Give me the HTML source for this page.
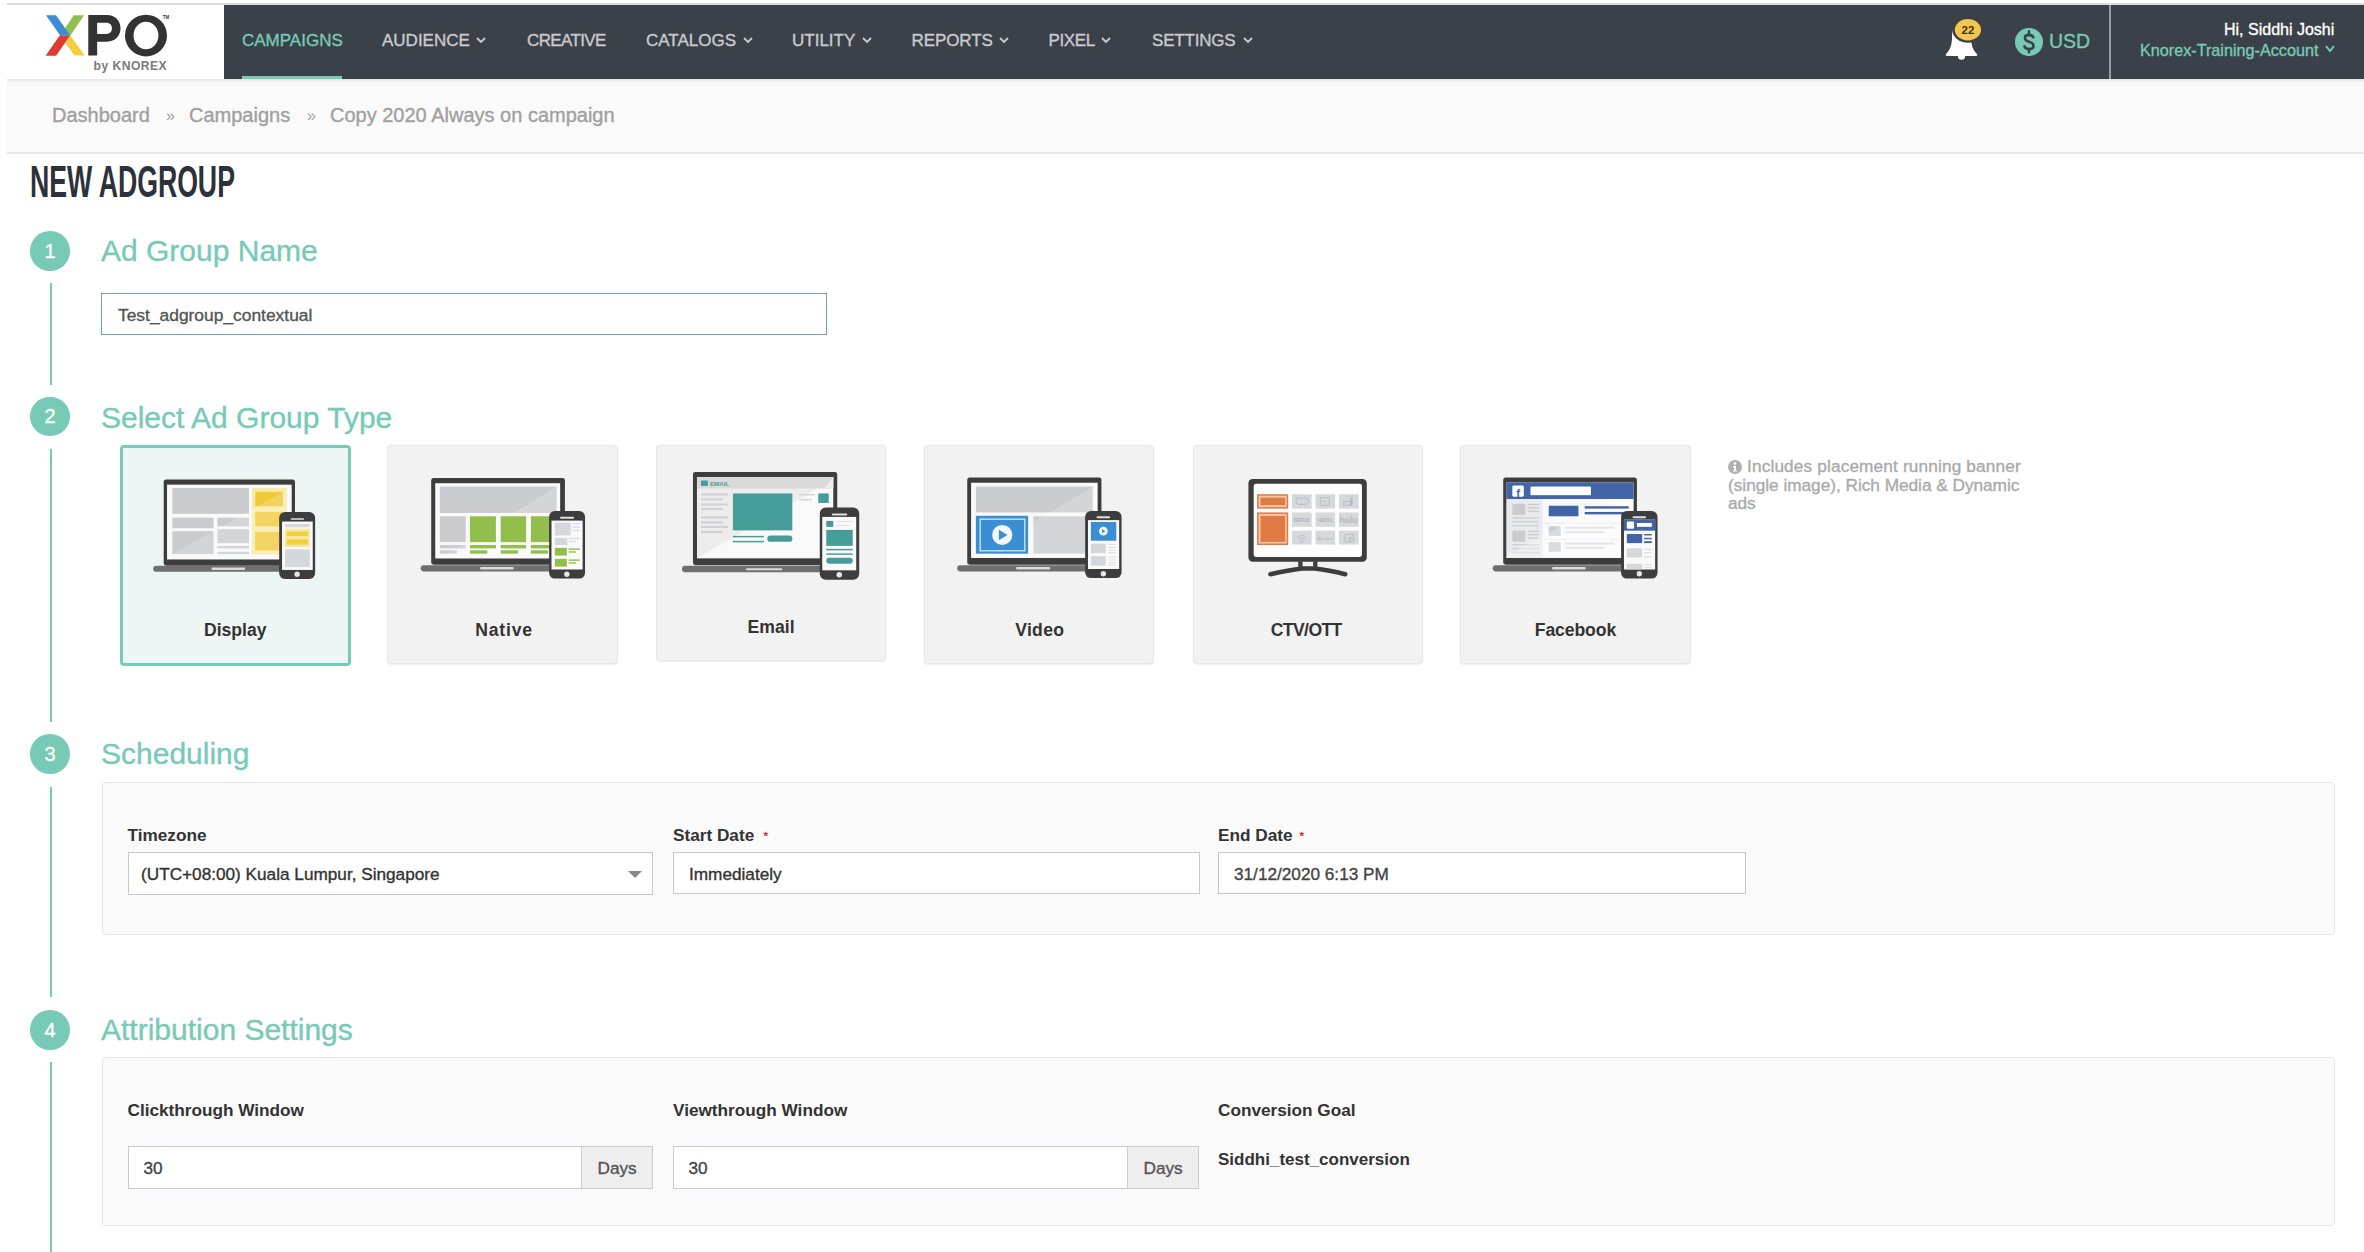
<!DOCTYPE html><html><head><meta charset="utf-8"><style>
html,body{margin:0;padding:0;background:#fff;width:2364px;height:1252px;overflow:hidden;position:relative;font-family:"Liberation Sans",sans-serif;}
.t{position:absolute;line-height:0;white-space:nowrap;-webkit-text-stroke:0.35px currentColor;}
svg{position:absolute;overflow:visible}
</style></head><body>

<div style="position:absolute;left:7px;top:3px;width:2357px;height:1.5px;background:#dddddd"></div>
<div style="position:absolute;left:224px;top:5px;width:2140px;height:74px;background:#3b4149"></div>
<div style="position:absolute;left:7px;top:79px;width:2357px;height:73px;background:#fafafa"></div>
<div style="position:absolute;left:7px;top:79px;width:2357px;height:4px;background:linear-gradient(#e4e4e6,#fafafa)"></div>
<div style="position:absolute;left:7px;top:152px;width:2357px;height:1.5px;background:#e8e8ea"></div>
<svg style="left:40px;top:10px;width:140px;height:65px" viewBox="0 0 2364 1098">
<polygon points="100,770 270,770 506,430 336,430" fill="#e03b2f"/>
<polygon points="580,770 755,770 511,430 341,430" fill="#f6cd3d"/>
<polygon points="100,770 270,770 506,430 336,430" fill="#e03b2f"/>
<polygon points="570,90 745,90 511,430 341,430" fill="#8dc04d"/>
<polygon points="100,90 270,90 511,430 341,430" fill="#3b8ed2"/>
<path fill="#333" fill-rule="evenodd" d="M815,770 V85 H1130 C1270,85 1360,180 1360,310 C1360,440 1270,535 1130,535 H965 V770 Z M965,215 H1120 C1180,215 1215,255 1215,310 C1215,365 1180,405 1120,405 H965 Z"/>
<path fill="#333" fill-rule="evenodd" d="M1435,432 A355,352 0 1,0 2145,432 A355,352 0 1,0 1435,432 Z M1580,432 A210,232 0 1,0 2000,432 A210,232 0 1,0 1580,432 Z"/>
<text x="2075" y="155" font-family="Liberation Sans" font-weight="bold" font-size="75" fill="#333">TM</text>
<text x="905" y="1015" font-family="Liberation Sans" font-weight="bold" font-size="205" fill="#7a7a7a" textLength="1235">by KNOREX</text>
</svg>
<div class="t" style="left:242px;top:41px;font-size:17px;color:#77cab5;font-weight:normal;">CAMPAIGNS</div>
<div style="position:absolute;left:242px;top:76px;width:100px;height:3px;background:#77cab5"></div>
<div class="t" style="left:382px;top:41px;font-size:17px;color:#c9cbd0;font-weight:normal;letter-spacing:0px">AUDIENCE</div>
<svg style="left:476px;top:37px;width:10px;height:6px" viewBox="0 0 10 6"><polyline points="1,1 5.0,5 9,1" fill="none" stroke="#c9cbd0" stroke-width="1.8"/></svg>
<div class="t" style="left:527px;top:41px;font-size:17px;color:#c9cbd0;font-weight:normal;letter-spacing:-0.63px">CREATIVE</div>
<div class="t" style="left:646px;top:41px;font-size:17px;color:#c9cbd0;font-weight:normal;letter-spacing:0px">CATALOGS</div>
<svg style="left:743px;top:37px;width:10px;height:6px" viewBox="0 0 10 6"><polyline points="1,1 5.0,5 9,1" fill="none" stroke="#c9cbd0" stroke-width="1.8"/></svg>
<div class="t" style="left:792px;top:41px;font-size:17px;color:#c9cbd0;font-weight:normal;letter-spacing:0px">UTILITY</div>
<svg style="left:862px;top:37px;width:10px;height:6px" viewBox="0 0 10 6"><polyline points="1,1 5.0,5 9,1" fill="none" stroke="#c9cbd0" stroke-width="1.8"/></svg>
<div class="t" style="left:911.5px;top:41px;font-size:17px;color:#c9cbd0;font-weight:normal;letter-spacing:-0.1px">REPORTS</div>
<svg style="left:999px;top:37px;width:10px;height:6px" viewBox="0 0 10 6"><polyline points="1,1 5.0,5 9,1" fill="none" stroke="#c9cbd0" stroke-width="1.8"/></svg>
<div class="t" style="left:1048.5px;top:41px;font-size:17px;color:#c9cbd0;font-weight:normal;letter-spacing:-0.35px">PIXEL</div>
<svg style="left:1101px;top:37px;width:10px;height:6px" viewBox="0 0 10 6"><polyline points="1,1 5.0,5 9,1" fill="none" stroke="#c9cbd0" stroke-width="1.8"/></svg>
<div class="t" style="left:1152px;top:41px;font-size:17px;color:#c9cbd0;font-weight:normal;letter-spacing:-0.2px">SETTINGS</div>
<svg style="left:1243px;top:37px;width:10px;height:6px" viewBox="0 0 10 6"><polyline points="1,1 5.0,5 9,1" fill="none" stroke="#c9cbd0" stroke-width="1.8"/></svg>
<svg style="left:1940px;top:15px;width:50px;height:50px" viewBox="0 0 50 50">
<path d="M21.5,8 C14,9 12,15 12,22 C12,30 10,35 6.5,38.5 C5,40 5.5,41 7.5,41 L35.5,41 C37.5,41 38,40 36.5,38.5 C33,35 31,30 31,22 C31,15 29,9 21.5,8 Z" fill="#fff"/>
<path d="M17.8,41 A3.7,3.7 0 0,0 25.2,41 Z" fill="#fff"/>
<ellipse cx="27.9" cy="14.8" rx="15.6" ry="13" fill="#3b4149"/>
<ellipse cx="27.9" cy="14.8" rx="13.1" ry="10.7" fill="#f4c54c"/>
<text x="27.9" y="19" text-anchor="middle" font-family="Liberation Sans" font-weight="bold" font-size="11.5" fill="#3a3520">22</text>
</svg>
<svg style="left:2015px;top:28px;width:28px;height:28px" viewBox="0 0 28 28">
<circle cx="14" cy="14" r="14" fill="#77cab5"/>
<path d="M18.3,9.3 C17.6,7.6 16.2,6.9 14,6.9 C11.4,6.9 9.9,8.2 9.9,10.2 C9.9,12.4 11.9,13.1 14,13.7 C16.4,14.4 18.5,15.2 18.5,17.7 C18.5,19.8 16.7,21.1 14,21.1 C11.7,21.1 10.2,20.2 9.4,18.4" fill="none" stroke="#3b4149" stroke-width="2.6" stroke-linecap="round"/>
<path d="M14,3.2 V7 M14,21 V24.2" stroke="#3b4149" stroke-width="2.4" stroke-linecap="round"/>
</svg>
<div class="t" style="left:2049px;top:41px;font-size:19.5px;color:#77cab5;font-weight:normal;">USD</div>
<div style="position:absolute;left:2109px;top:5px;width:2px;height:74px;background:#9a9ea4"></div>
<div class="t" style="left:2224px;top:30px;font-size:16px;color:#ffffff;font-weight:normal;">Hi, Siddhi Joshi</div>
<div class="t" style="left:2140px;top:50px;font-size:16.2px;color:#77cab5;font-weight:normal;">Knorex-Training-Account</div>
<svg style="left:2325px;top:45px;width:10px;height:7px" viewBox="0 0 10 7"><polyline points="1,1 5.0,6 9,1" fill="none" stroke="#77cab5" stroke-width="2"/></svg>
<div class="t" style="left:52px;top:115px;font-size:20px;color:#a0a0a0;font-weight:normal;">Dashboard</div>
<div class="t" style="left:166px;top:116px;font-size:16px;color:#a0a0a0;font-weight:normal;-webkit-text-stroke:0">»</div>
<div class="t" style="left:189px;top:115px;font-size:20px;color:#a0a0a0;font-weight:normal;">Campaigns</div>
<div class="t" style="left:307px;top:116px;font-size:16px;color:#a0a0a0;font-weight:normal;-webkit-text-stroke:0">»</div>
<div class="t" style="left:330px;top:115px;font-size:20px;color:#a0a0a0;font-weight:normal;">Copy 2020 Always on campaign</div>
<div class="t" style="left:29.5px;top:182px;font-size:44px;font-weight:bold;-webkit-text-stroke:0;color:#2d3139;transform-origin:0 0;transform:scaleX(0.606)">NEW ADGROUP</div>
<div style="position:absolute;left:30.2px;top:231.15px;width:39.5px;height:39.5px;background:#77cab5;border-radius:50%"></div>
<div class="t" style="left:30px;width:40px;text-align:center;top:251px;font-size:20px;color:#fff">1</div>
<div class="t" style="left:101px;top:251px;font-size:30px;color:#77cab5;font-weight:normal;">Ad Group Name</div>
<div style="position:absolute;left:50px;top:282.5px;width:2px;height:102.30000000000001px;background:#77cab5"></div>
<div style="position:absolute;left:30.2px;top:396.65px;width:39.5px;height:39.5px;background:#77cab5;border-radius:50%"></div>
<div class="t" style="left:30px;width:40px;text-align:center;top:416px;font-size:20px;color:#fff">2</div>
<div class="t" style="left:101px;top:418px;font-size:30px;color:#77cab5;font-weight:normal;">Select Ad Group Type</div>
<div style="position:absolute;left:50px;top:449px;width:2px;height:273px;background:#77cab5"></div>
<div style="position:absolute;left:30.2px;top:734.05px;width:39.5px;height:39.5px;background:#77cab5;border-radius:50%"></div>
<div class="t" style="left:30px;width:40px;text-align:center;top:754px;font-size:20px;color:#fff">3</div>
<div class="t" style="left:101px;top:754px;font-size:30px;color:#77cab5;font-weight:normal;">Scheduling</div>
<div style="position:absolute;left:50px;top:787px;width:2px;height:209.79999999999995px;background:#77cab5"></div>
<div style="position:absolute;left:30.2px;top:1010.25px;width:39.5px;height:39.5px;background:#77cab5;border-radius:50%"></div>
<div class="t" style="left:30px;width:40px;text-align:center;top:1030px;font-size:20px;color:#fff">4</div>
<div class="t" style="left:101px;top:1030px;font-size:30px;color:#77cab5;font-weight:normal;">Attribution Settings</div>
<div style="position:absolute;left:50px;top:1061.5px;width:2px;height:190.5px;background:#77cab5"></div>
<div style="position:absolute;left:101px;top:292.5px;width:725.5px;height:42.5px;box-sizing:border-box;border:1.8px solid #69a6ae;background:#fff"></div>
<div class="t" style="left:118px;top:315px;font-size:17.4px;color:#555;font-weight:normal;">Test_adgroup_contextual</div>
<div style="position:absolute;left:119.6px;top:445px;width:231.3px;height:221px;box-sizing:border-box;border:3px solid #77cab5;border-radius:4px;background:#edf6f4"></div>
<div class="t" style="left:119.60px;width:231.30px;text-align:center;top:630px;font-size:17.6px;font-weight:bold;-webkit-text-stroke:0;color:#333;letter-spacing:0px">Display</div>
<div style="position:absolute;left:387.3px;top:445px;width:230.6px;height:218.8px;box-sizing:border-box;border:1px solid #e8e8e8;border-radius:4px;background:#f2f2f2;box-shadow:0 0.5px 1.5px rgba(0,0,0,0.07)"></div>
<div class="t" style="left:388.80px;width:230.60px;text-align:center;top:630px;font-size:17.6px;font-weight:bold;-webkit-text-stroke:0;color:#333;letter-spacing:0.8px">Native</div>
<div style="position:absolute;left:656.2px;top:445px;width:229.8px;height:215.8px;box-sizing:border-box;border:1px solid #e8e8e8;border-radius:4px;background:#f2f2f2;box-shadow:0 0.5px 1.5px rgba(0,0,0,0.07)"></div>
<div class="t" style="left:656.20px;width:229.80px;text-align:center;top:627px;font-size:17.6px;font-weight:bold;-webkit-text-stroke:0;color:#333;letter-spacing:0px">Email</div>
<div style="position:absolute;left:924.3px;top:445px;width:229.5px;height:219.3px;box-sizing:border-box;border:1px solid #e8e8e8;border-radius:4px;background:#f2f2f2;box-shadow:0 0.5px 1.5px rgba(0,0,0,0.07)"></div>
<div class="t" style="left:925.00px;width:229.50px;text-align:center;top:630px;font-size:17.6px;font-weight:bold;-webkit-text-stroke:0;color:#333;letter-spacing:0.3px">Video</div>
<div style="position:absolute;left:1192.7px;top:445px;width:230.1px;height:218.8px;box-sizing:border-box;border:1px solid #e8e8e8;border-radius:4px;background:#f2f2f2;box-shadow:0 0.5px 1.5px rgba(0,0,0,0.07)"></div>
<div class="t" style="left:1191.20px;width:230.10px;text-align:center;top:630px;font-size:17.6px;font-weight:bold;-webkit-text-stroke:0;color:#333;letter-spacing:-0.6px">CTV/OTT</div>
<div style="position:absolute;left:1460px;top:445px;width:230.8px;height:218.8px;box-sizing:border-box;border:1px solid #e8e8e8;border-radius:4px;background:#f2f2f2;box-shadow:0 0.5px 1.5px rgba(0,0,0,0.07)"></div>
<div class="t" style="left:1460.00px;width:230.80px;text-align:center;top:630px;font-size:17.6px;font-weight:bold;-webkit-text-stroke:0;color:#333;letter-spacing:-0.1px">Facebook</div>
<svg style="left:145px;top:465px;width:180px;height:120px" viewBox="0 0 1878 1252"><rect x="195" y="150" width="1370" height="900" rx="25" fill="#3d3d3d"/><rect x="230" y="205" width="1300" height="780" rx="0" fill="#f9f9f9"/><rect x="285" y="240" width="800" height="270" rx="0" fill="#c9cbcf"/><rect x="285" y="550" width="430" height="110" rx="0" fill="#c9cbcf"/><rect x="755" y="550" width="330" height="90" rx="0" fill="#c9cbcf"/><rect x="285" y="690" width="430" height="240" rx="0" fill="#c9cbcf"/><rect x="755" y="670" width="330" height="145" rx="0" fill="#c9cbcf"/><rect x="755" y="845" width="330" height="25" rx="0" fill="#c9cbcf"/><rect x="755" y="905" width="330" height="25" rx="0" fill="#c9cbcf"/><rect x="1115" y="240" width="365" height="695" rx="0" fill="#f8eba6"/><rect x="1150" y="280" width="290" height="150" rx="0" fill="#efc938"/><rect x="1150" y="490" width="290" height="150" rx="0" fill="#f0ca3a"/><rect x="1150" y="700" width="290" height="190" rx="0" fill="#f0ca3a"/><clipPath id="gl1"><rect x="230" y="205" width="1300" height="780"/></clipPath><polygon clip-path="url(#gl1)" points="130,1016.8 1630,176.79999999999995 1630,1085 130,1085" fill="#fff" fill-opacity="0.2"/><rect x="85" y="1050" width="1475" height="65" rx="32.5" fill="#6f6f6f"/><rect x="695" y="1070" width="350" height="25" rx="10" fill="#dadada"/><rect x="1400" y="490" width="375" height="700" rx="60" fill="#3d3d3d"/><rect x="1430" y="590" width="320" height="505" rx="0" fill="#fafafa"/><rect x="1520" y="555" width="140" height="17" rx="8" fill="#e0e0e0"/><circle cx="1587" cy="1140" r="28" fill="#e6e6e6"/><rect x="1460" y="615" width="260" height="35" rx="0" fill="#d4d7dc"/><rect x="1455" y="665" width="265" height="190" rx="0" fill="#f7e7a0"/><rect x="1480" y="695" width="220" height="45" rx="0" fill="#f2cf3f"/><rect x="1480" y="775" width="220" height="55" rx="0" fill="#f2cf3f"/><rect x="1460" y="880" width="260" height="185" rx="0" fill="#d4d7dc"/></svg>
<svg style="left:413px;top:465px;width:180px;height:120px" viewBox="0 0 1878 1252"><rect x="190" y="135" width="1395" height="905" rx="25" fill="#3d3d3d"/><rect x="232" y="190" width="1303" height="785" rx="0" fill="#f9f9f9"/><rect x="280" y="225" width="1220" height="275" rx="0" fill="#c9cbcf"/><rect x="280" y="535" width="270" height="270" rx="0" fill="#c9cbcf"/><rect x="280" y="835" width="270" height="35" rx="0" fill="#c9cbcf"/><rect x="280" y="890" width="180" height="35" rx="0" fill="#c9cbcf"/><clipPath id="gl2"><rect x="232" y="190" width="1303" height="785"/></clipPath><polygon clip-path="url(#gl2)" points="132,1059.98 1635,143.15000000000003 1635,1075 132,1075" fill="#fff" fill-opacity="0.2"/><rect x="595" y="535" width="270" height="270" rx="0" fill="#92be4c"/><rect x="595" y="835" width="270" height="35" rx="0" fill="#92be4c"/><rect x="595" y="890" width="180" height="35" rx="0" fill="#92be4c"/><rect x="915" y="535" width="265" height="270" rx="0" fill="#92be4c"/><rect x="915" y="835" width="265" height="35" rx="0" fill="#92be4c"/><rect x="915" y="890" width="180" height="35" rx="0" fill="#92be4c"/><rect x="1230" y="535" width="270" height="270" rx="0" fill="#92be4c"/><rect x="1230" y="835" width="270" height="35" rx="0" fill="#92be4c"/><rect x="1230" y="890" width="180" height="35" rx="0" fill="#92be4c"/><rect x="80" y="1045" width="1480" height="65" rx="32.5" fill="#6f6f6f"/><rect x="700" y="1065" width="350" height="25" rx="10" fill="#dadada"/><rect x="1420" y="480" width="375" height="705" rx="60" fill="#3d3d3d"/><rect x="1445" y="580" width="325" height="510" rx="0" fill="#fafafa"/><rect x="1535" y="540" width="145" height="20" rx="8" fill="#e0e0e0"/><circle cx="1605" cy="1140" r="28" fill="#e6e6e6"/><rect x="1480" y="600" width="165" height="135" rx="0" fill="#d4d7dc"/><rect x="1660" y="605" width="80" height="15" rx="0" fill="#dde"/><rect x="1660" y="640" width="80" height="15" rx="0" fill="#dde"/><rect x="1660" y="675" width="80" height="15" rx="0" fill="#dde"/><rect x="1480" y="760" width="130" height="75" rx="0" fill="#d4d7dc"/><rect x="1625" y="760" width="115" height="15" rx="0" fill="#dde"/><rect x="1625" y="790" width="75" height="15" rx="0" fill="#dde"/><rect x="1480" y="865" width="125" height="80" rx="0" fill="#92be4c"/><rect x="1625" y="870" width="115" height="15" rx="0" fill="#92be4c"/><rect x="1625" y="900" width="75" height="15" rx="0" fill="#92be4c"/><rect x="1480" y="980" width="125" height="80" rx="0" fill="#92be4c"/><rect x="1625" y="985" width="115" height="15" rx="0" fill="#92be4c"/><rect x="1625" y="1015" width="75" height="15" rx="0" fill="#92be4c"/></svg>
<svg style="left:678px;top:462px;width:190px;height:125px" viewBox="0 0 1903 1252"><rect x="150" y="100" width="1445" height="935" rx="25" fill="#3d3d3d"/><rect x="190" y="150" width="1365" height="815" rx="0" fill="#f9f9f9"/><polygon points="190,150 1555,150 1555,170 190,965" fill="#ececec"/><polygon points="190,150 1555,150 1555,265 190,265" fill="#dadada"/><polygon points="1460,265 1555,265 1555,150 1555,150" fill="#ececec"/><rect x="230" y="185" width="70" height="55" rx="8" fill="#459c99"/><text x="320" y="238" font-family="Liberation Sans" font-size="62" font-weight="bold" fill="#459c99">EMAIL</text><rect x="230" y="315" width="270" height="20" rx="0" fill="#cfcfd4"/><rect x="230" y="365" width="220" height="20" rx="0" fill="#cfcfd4"/><rect x="230" y="415" width="270" height="20" rx="0" fill="#cfcfd4"/><rect x="230" y="460" width="220" height="20" rx="0" fill="#cfcfd4"/><rect x="230" y="545" width="270" height="20" rx="0" fill="#cfcfd4"/><rect x="230" y="595" width="220" height="20" rx="0" fill="#cfcfd4"/><rect x="230" y="640" width="270" height="20" rx="0" fill="#cfcfd4"/><rect x="230" y="690" width="220" height="20" rx="0" fill="#cfcfd4"/><rect x="550" y="315" width="595" height="370" rx="0" fill="#459c99"/><rect x="550" y="740" width="310" height="15" rx="0" fill="#459c99"/><rect x="550" y="790" width="310" height="15" rx="0" fill="#459c99"/><rect x="895" y="735" width="250" height="65" rx="32" fill="#459c99"/><rect x="1405" y="315" width="105" height="95" rx="0" fill="#459c99"/><rect x="1215" y="320" width="155" height="15" rx="0" fill="#d5d5d5"/><rect x="1215" y="370" width="125" height="15" rx="0" fill="#d5d5d5"/><rect x="40" y="1040" width="1520" height="65" rx="32.5" fill="#6f6f6f"/><rect x="680" y="1065" width="365" height="20" rx="10" fill="#dadada"/><rect x="1420" y="455" width="395" height="725" rx="60" fill="#3d3d3d"/><rect x="1445" y="550" width="340" height="535" rx="0" fill="#fafafa"/><rect x="1540" y="515" width="155" height="20" rx="8" fill="#e0e0e0"/><circle cx="1615" cy="1130" r="28" fill="#e6e6e6"/><rect x="1485" y="590" width="70" height="60" rx="0" fill="#459c99"/><rect x="1585" y="590" width="165" height="10" rx="0" fill="#ddd"/><rect x="1585" y="632" width="135" height="10" rx="0" fill="#ddd"/><rect x="1485" y="680" width="265" height="160" rx="0" fill="#459c99"/><rect x="1485" y="870" width="265" height="15" rx="0" fill="#459c99"/><rect x="1485" y="915" width="265" height="15" rx="0" fill="#459c99"/><rect x="1485" y="960" width="265" height="60" rx="30" fill="#459c99"/></svg>
<svg style="left:950px;top:465px;width:180px;height:120px" viewBox="0 0 1878 1252"><rect x="180" y="130" width="1400" height="910" rx="25" fill="#3d3d3d"/><rect x="220" y="185" width="1320" height="785" rx="0" fill="#f9f9f9"/><rect x="270" y="225" width="1220" height="270" rx="0" fill="#c9cbcf"/><rect x="870" y="535" width="630" height="390" rx="0" fill="#c9cbcf"/><clipPath id="gl3"><rect x="220" y="185" width="1320" height="785"/></clipPath><polygon clip-path="url(#gl3)" points="120,1037.8 1640,141.0 1640,1070 120,1070" fill="#fff" fill-opacity="0.2"/><rect x="270" y="530" width="545" height="395" rx="0" fill="#3a8fd3"/><rect x="315" y="565" width="465" height="330" fill="none" stroke="#cde6fb" stroke-width="14"/><circle cx="545" cy="730" r="105" fill="#f4f7fa"/><polygon points="510,675 510,785 600,730" fill="#3a8fd3"/><rect x="75" y="1045" width="1485" height="65" rx="32.5" fill="#6f6f6f"/><rect x="690" y="1065" width="355" height="25" rx="10" fill="#dadada"/><rect x="1410" y="480" width="380" height="700" rx="60" fill="#3d3d3d"/><rect x="1440" y="575" width="325" height="510" rx="0" fill="#fafafa"/><rect x="1530" y="535" width="140" height="20" rx="8" fill="#e0e0e0"/><circle cx="1600" cy="1135" r="28" fill="#e6e6e6"/><rect x="1470" y="595" width="265" height="195" rx="0" fill="#3a8fd3"/><circle cx="1600" cy="690" r="45" fill="#f4f7fa"/><polygon points="1585,668 1585,712 1622,690" fill="#3a8fd3"/><rect x="1470" y="820" width="155" height="100" rx="0" fill="#d4d7dc"/><rect x="1470" y="950" width="155" height="100" rx="0" fill="#d4d7dc"/><rect x="1650" y="825" width="80" height="10" rx="0" fill="#d8dbe0"/><rect x="1650" y="855" width="80" height="10" rx="0" fill="#d8dbe0"/><rect x="1650" y="885" width="80" height="10" rx="0" fill="#d8dbe0"/><rect x="1650" y="910" width="80" height="10" rx="0" fill="#d8dbe0"/><rect x="1650" y="955" width="80" height="10" rx="0" fill="#d8dbe0"/><rect x="1650" y="985" width="80" height="10" rx="0" fill="#d8dbe0"/><rect x="1650" y="1015" width="80" height="10" rx="0" fill="#d8dbe0"/><rect x="1650" y="1040" width="80" height="10" rx="0" fill="#d8dbe0"/></svg>
<svg style="left:1235px;top:465px;width:145px;height:120px" viewBox="0 0 1513 1252"><rect x="140" y="145" width="1235" height="865" rx="45" fill="#3d3d3d"/><rect x="195" y="195" width="1130" height="765" rx="25" fill="#fdfdfd"/><rect x="230" y="305" width="325" height="150" rx="0" fill="#e07b46"/><rect x="246" y="321" width="293" height="118" rx="0" fill="#f8c7a5"/><rect x="266" y="341" width="257" height="78" rx="0" fill="#e07b46"/><rect x="230" y="495" width="325" height="340" rx="0" fill="#e07b46"/><rect x="246" y="511" width="293" height="308" rx="0" fill="#f8c7a5"/><rect x="266" y="531" width="257" height="272" rx="0" fill="#e07b46"/><rect x="595" y="305" width="205" height="150" rx="0" fill="#d5d8dd"/><rect x="595" y="495" width="205" height="150" rx="0" fill="#d5d8dd"/><rect x="595" y="685" width="205" height="145" rx="0" fill="#d5d8dd"/><rect x="840" y="305" width="205" height="150" rx="0" fill="#d5d8dd"/><rect x="840" y="495" width="205" height="150" rx="0" fill="#d5d8dd"/><rect x="840" y="685" width="205" height="145" rx="0" fill="#d5d8dd"/><rect x="1085" y="305" width="205" height="150" rx="0" fill="#d5d8dd"/><rect x="1085" y="495" width="205" height="150" rx="0" fill="#d5d8dd"/><rect x="1085" y="685" width="205" height="145" rx="0" fill="#d5d8dd"/><text x="1187" y="605" text-anchor="middle" font-family="Liberation Sans" font-weight="bold" font-size="88" fill="#b5b8be">hulu</text><rect x="635" y="345" width="130" height="65" rx="30" fill="none" stroke="#b5b8be" stroke-width="10"/><rect x="890" y="340" width="95" height="80" rx="10" fill="none" stroke="#b5b8be" stroke-width="9"/><rect x="915" y="375" width="40" height="8" fill="#b5b8be"/><rect x="1135" y="380" width="70" height="40" fill="none" stroke="#b5b8be" stroke-width="9"/><rect x="1205" y="340" width="22" height="80" fill="#b5b8be"/><text x="697" y="598" text-anchor="middle" font-family="Liberation Sans" font-weight="bold" font-size="56" fill="#b5b8be" textLength="170">NETFLIX</text><text x="942" y="596" text-anchor="middle" font-family="Liberation Sans" font-weight="bold" font-size="50" fill="#b5b8be" textLength="150">HBO GO</text><path d="M650,755 Q697,715 744,755 M665,775 Q697,748 729,775 M680,795 Q697,782 714,795" fill="none" stroke="#b5b8be" stroke-width="9"/><circle cx="697" cy="812" r="8" fill="#b5b8be"/><text x="942" y="785" text-anchor="middle" font-family="Liberation Sans" font-weight="bold" font-size="44" fill="#b5b8be" textLength="170">Movies</text><rect x="1150" y="722" width="85" height="80" rx="8" fill="none" stroke="#b5b8be" stroke-width="9"/><text x="1200" y="800" text-anchor="middle" font-family="Liberation Sans" font-weight="bold" font-size="80" fill="#b5b8be">f</text><rect x="660" y="1005" width="45" height="70" rx="0" fill="#3d3d3d"/><rect x="815" y="1005" width="45" height="70" rx="0" fill="#3d3d3d"/><path d="M370,1140 Q560,1095 700,1080 L830,1080 Q980,1095 1150,1140" fill="none" stroke="#3d3d3d" stroke-width="48" stroke-linecap="round"/></svg>
<svg style="left:1485px;top:465px;width:180px;height:120px" viewBox="0 0 1878 1252"><rect x="190" y="130" width="1395" height="910" rx="25" fill="#3d3d3d"/><rect x="225" y="180" width="1325" height="790" rx="0" fill="#f9f9f9"/><rect x="225" y="180" width="1325" height="175" rx="0" fill="#4464a8"/><rect x="285" y="215" width="120" height="115" rx="15" fill="#fff"/><text x="325" y="330" font-family="Liberation Sans" font-weight="bold" font-size="120" fill="#4464a8">f</text><rect x="475" y="225" width="630" height="90" rx="0" fill="#fff"/><rect x="225" y="355" width="375" height="615" rx="0" fill="#e9eaed"/><rect x="285" y="405" width="135" height="115" rx="0" fill="#c9cbcf"/><rect x="285" y="685" width="135" height="115" rx="0" fill="#c9cbcf"/><rect x="445" y="405" width="120" height="15" rx="0" fill="#ccc"/><rect x="445" y="440" width="120" height="15" rx="0" fill="#ccc"/><rect x="445" y="475" width="120" height="15" rx="0" fill="#ccc"/><rect x="285" y="545" width="280" height="15" rx="0" fill="#d0d0d0"/><rect x="285" y="585" width="280" height="15" rx="0" fill="#d0d0d0"/><rect x="285" y="625" width="280" height="15" rx="0" fill="#d0d0d0"/><rect x="285" y="825" width="280" height="15" rx="0" fill="#d0d0d0"/><rect x="285" y="865" width="280" height="15" rx="0" fill="#d0d0d0"/><rect x="285" y="905" width="280" height="15" rx="0" fill="#d0d0d0"/><rect x="445" y="685" width="120" height="15" rx="0" fill="#ccc"/><rect x="445" y="720" width="120" height="15" rx="0" fill="#ccc"/><rect x="445" y="755" width="120" height="15" rx="0" fill="#ccc"/><rect x="610" y="603" width="810" height="7" rx="0" fill="#e3e3e3"/><rect x="610" y="773" width="810" height="7" rx="0" fill="#e3e3e3"/><rect x="665" y="640" width="125" height="100" rx="0" fill="#c9cbcf"/><rect x="835" y="645" width="515" height="20" rx="0" fill="#d8d9dd"/><rect x="835" y="690" width="410" height="20" rx="0" fill="#d8d9dd"/><rect x="665" y="805" width="125" height="100" rx="0" fill="#c9cbcf"/><rect x="835" y="810" width="515" height="20" rx="0" fill="#d8d9dd"/><rect x="835" y="855" width="410" height="20" rx="0" fill="#d8d9dd"/><clipPath id="gl4"><rect x="225" y="356" width="1325" height="614"/></clipPath><polygon clip-path="url(#gl4)" points="125,994.9 1650,171.39999999999998 1650,1070 125,1070" fill="#fff" fill-opacity="0.3"/><rect x="665" y="425" width="310" height="110" rx="0" fill="#4464a8"/><rect x="1040" y="430" width="460" height="25" rx="0" fill="#4464a8"/><rect x="1040" y="490" width="460" height="25" rx="0" fill="#4464a8"/><rect x="80" y="1045" width="1480" height="65" rx="32.5" fill="#6f6f6f"/><rect x="700" y="1065" width="350" height="25" rx="10" fill="#dadada"/><rect x="1420" y="480" width="380" height="705" rx="60" fill="#3d3d3d"/><rect x="1450" y="570" width="325" height="520" rx="0" fill="#fafafa"/><rect x="1540" y="535" width="140" height="20" rx="8" fill="#e0e0e0"/><circle cx="1610" cy="1135" r="28" fill="#e6e6e6"/><rect x="1450" y="570" width="325" height="115" rx="0" fill="#4464a8"/><rect x="1480" y="590" width="75" height="75" rx="10" fill="#fff"/><rect x="1585" y="605" width="155" height="40" rx="0" fill="#fff"/><rect x="1480" y="720" width="160" height="95" rx="0" fill="#4464a8"/><rect x="1660" y="720" width="80" height="15" rx="0" fill="#4464a8"/><rect x="1660" y="760" width="80" height="15" rx="0" fill="#4464a8"/><rect x="1660" y="795" width="80" height="20" rx="0" fill="#4464a8"/><rect x="1480" y="870" width="160" height="95" rx="0" fill="#d5d7db"/><rect x="1480" y="1030" width="160" height="60" rx="0" fill="#d5d7db"/><rect x="1660" y="875" width="80" height="12" rx="0" fill="#dcdcdc"/><rect x="1660" y="910" width="80" height="12" rx="0" fill="#dcdcdc"/><rect x="1660" y="950" width="80" height="12" rx="0" fill="#dcdcdc"/><rect x="1660" y="1035" width="80" height="12" rx="0" fill="#dcdcdc"/><rect x="1660" y="1065" width="80" height="12" rx="0" fill="#dcdcdc"/></svg>
<svg style="left:1728px;top:459.5px;width:14px;height:14px" viewBox="0 0 14 14"><circle cx="7" cy="7" r="7" fill="#b0b0b0"/><circle cx="7" cy="3.6" r="1.3" fill="#fff"/><path d="M5,6 H8 V10.5 H9 V11.6 H5 V10.5 H6 V7.1 H5 Z" fill="#fff"/></svg>
<div class="t" style="left:1747px;top:466px;font-size:17.2px;color:#aaaaaa;font-weight:normal;letter-spacing:0.16px">Includes placement running banner</div>
<div class="t" style="left:1728px;top:485px;font-size:17.2px;color:#aaaaaa;font-weight:normal;">(single image), Rich Media &amp; Dynamic</div>
<div class="t" style="left:1728px;top:503px;font-size:17.2px;color:#aaaaaa;font-weight:normal;">ads</div>
<div style="position:absolute;left:102px;top:782px;width:2233px;height:153px;box-sizing:border-box;border:1.5px solid #e6e6e6;border-radius:4px;background:#fafafa"></div>
<div class="t" style="left:127.5px;top:835px;font-size:17.2px;color:#333;font-weight:bold;-webkit-text-stroke:0;">Timezone</div>
<div class="t" style="left:673px;top:835px;font-size:17.2px;color:#333;font-weight:bold;-webkit-text-stroke:0;">Start Date</div>
<div class="t" style="left:763.5px;top:836px;font-size:11.5px;color:#c9302c;font-weight:normal;">*</div>
<div class="t" style="left:1218px;top:835px;font-size:17.2px;color:#333;font-weight:bold;-webkit-text-stroke:0;">End Date</div>
<div class="t" style="left:1299.5px;top:836px;font-size:11.5px;color:#c9302c;font-weight:normal;">*</div>
<div style="position:absolute;left:128px;top:851.5px;width:525px;height:43.5px;box-sizing:border-box;border:1.5px solid #c9c9c9;background:#fff"></div>
<div class="t" style="left:141px;top:874px;font-size:17.2px;color:#333;font-weight:normal;">(UTC+08:00) Kuala Lumpur, Singapore</div>
<svg style="left:628px;top:871px;width:14px;height:7px" viewBox="0 0 14 7"><polygon points="0,0 14,0 7,7" fill="#888"/></svg>
<div style="position:absolute;left:673px;top:851.5px;width:527px;height:42.5px;box-sizing:border-box;border:1.5px solid #c9c9c9;background:#fff"></div>
<div class="t" style="left:689px;top:874px;font-size:17.2px;color:#333;font-weight:normal;">Immediately</div>
<div style="position:absolute;left:1218px;top:851.5px;width:527.5px;height:42.5px;box-sizing:border-box;border:1.5px solid #c6c6d2;background:#fff"></div>
<div class="t" style="left:1234px;top:874px;font-size:17.2px;color:#444;font-weight:normal;">31/12/2020 6:13 PM</div>
<div style="position:absolute;left:102px;top:1057px;width:2233px;height:169px;box-sizing:border-box;border:1.5px solid #e6e6e6;border-radius:4px;background:#fafafa"></div>
<div class="t" style="left:127.5px;top:1110px;font-size:17.2px;color:#333;font-weight:bold;-webkit-text-stroke:0;">Clickthrough Window</div>
<div class="t" style="left:673px;top:1110px;font-size:17.2px;color:#333;font-weight:bold;-webkit-text-stroke:0;">Viewthrough Window</div>
<div class="t" style="left:1218px;top:1110px;font-size:17.2px;color:#333;font-weight:bold;-webkit-text-stroke:0;">Conversion Goal</div>
<div style="position:absolute;left:128px;top:1146px;width:525px;height:43px;box-sizing:border-box;border:1.5px solid #c9c9d3;background:#fff"></div>
<div style="position:absolute;left:581px;top:1146px;width:72px;height:43px;box-sizing:border-box;border:1.5px solid #cdcdcd;background:#eeeeee"></div>
<div class="t" style="left:143.5px;top:1168px;font-size:17.2px;color:#444;font-weight:normal;">30</div>
<div class="t" style="left:597.5px;top:1168px;font-size:17.2px;color:#555;font-weight:normal;">Days</div>
<div style="position:absolute;left:673px;top:1146px;width:526px;height:43px;box-sizing:border-box;border:1.5px solid #c9c9d3;background:#fff"></div>
<div style="position:absolute;left:1127px;top:1146px;width:72px;height:43px;box-sizing:border-box;border:1.5px solid #cdcdcd;background:#eeeeee"></div>
<div class="t" style="left:688.5px;top:1168px;font-size:17.2px;color:#444;font-weight:normal;">30</div>
<div class="t" style="left:1143.5px;top:1168px;font-size:17.2px;color:#555;font-weight:normal;">Days</div>
<div class="t" style="left:1218px;top:1160px;font-size:17px;color:#333;font-weight:bold;-webkit-text-stroke:0;">Siddhi_test_conversion</div>
</body></html>
